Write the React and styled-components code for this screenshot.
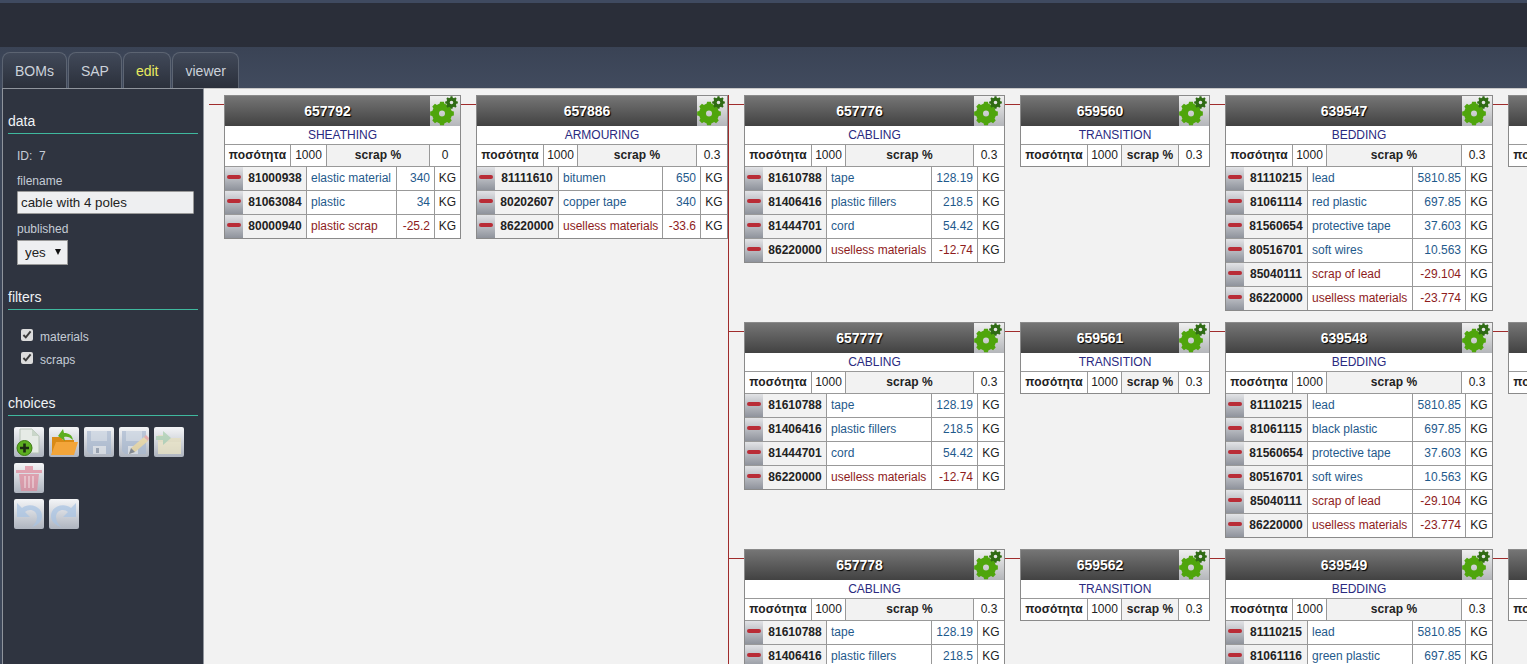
import React from 'react';
import styled, { createGlobalStyle } from 'styled-components';

const gearPath = (cx, cy, outer, inner, hole, teeth) => {
  let d = '';
  const step = (Math.PI * 2) / teeth;
  for (let i = 0; i < teeth; i++) {
    const a = i * step;
    const pts = [
      [inner, a - step * 0.5],
      [inner, a - step * 0.32],
      [outer, a - step * 0.2],
      [outer, a + step * 0.2],
      [inner, a + step * 0.32],
    ];
    pts.forEach(([r, t], j) => {
      const x = (cx + r * Math.cos(t)).toFixed(2);
      const y = (cy + r * Math.sin(t)).toFixed(2);
      d += `${i === 0 && j === 0 ? 'M' : 'L'}${x} ${y} `;
    });
  }
  d += 'Z ';
  d += `M${cx + hole} ${cy} A${hole} ${hole} 0 1 0 ${cx - hole} ${cy} A${hole} ${hole} 0 1 0 ${cx + hole} ${cy} Z`;
  return d;
};

const GearIcon = () => (
  <svg width="30" height="30" viewBox="0 0 30 30">
    <path d={gearPath(12, 17.5, 12, 10, 3, 8)} fill="#4fa50c" fillRule="evenodd" />
    <path d={gearPath(21.5, 6.5, 6.4, 5, 1.8, 8)} fill="#2f6b14" fillRule="evenodd" />
  </svg>
);

const PlusDocIcon = () => (
  <svg width="30" height="30" viewBox="0 0 30 30">
    <path d="M6 2h12l7 7v17H6z" fill="#e6ebe6" stroke="#b7c4b7" />
    <path d="M18 2v7h7z" fill="#c9d6c9" />
    <circle cx="10.5" cy="21" r="7.5" fill="#5cae20" stroke="#3d7a12" />
    <path d="M10.5 16.5v9M6 21h9" stroke="#1c2a12" strokeWidth="2.6" />
  </svg>
);

const OpenFolderIcon = () => (
  <svg width="30" height="30" viewBox="0 0 30 30">
    <path d="M3 28V10h9l2 3h11v3H8z" fill="#d98a16" />
    <path d="M7 15h22l-4 13H2z" fill="#f3a53a" />
    <path d="M9 9l5-7 1 4c5 0 8 2 9 7-3-3-6-4-9-3l1 4z" fill="#5cae20" />
  </svg>
);

const FloppyIcon = () => (
  <svg width="30" height="30" viewBox="0 0 30 30">
    <path d="M3 4h24v23H6l-3-3z" fill="#a9b9d0" />
    <path d="M7 4h16v10H7z" fill="#c9d3e0" />
    <path d="M9 19h13v8H9z" fill="#dfe4ea" />
    <path d="M12 21h3v5h-3z" fill="#8b97a8" />
  </svg>
);

const FloppyEditIcon = () => (
  <svg width="30" height="30" viewBox="0 0 30 30">
    <path d="M3 4h24v23H6l-3-3z" fill="#a9b9d0" />
    <path d="M7 4h16v10H7z" fill="#c9d3e0" />
    <path d="M9 19h10v8H9z" fill="#dfe4ea" />
    <path d="M10 27l2-6 13-11 4 4-13 11z" fill="#ecd79a" />
    <path d="M25 10l2-2 3 3-1 3z" fill="#e69a9a" />
    <path d="M10 27l2-6 4 4z" fill="#6d7480" />
  </svg>
);

const SendFolderIcon = () => (
  <svg width="30" height="30" viewBox="0 0 30 30">
    <path d="M4 27V8h9l2 3h12v16z" fill="#e6dfbd" />
    <path d="M4 15h23v12H4z" fill="#ede6c4" />
    <path d="M2 9h7V4l8 7-8 7v-5H2z" fill="#a9cfae" />
  </svg>
);

const TrashIcon = () => (
  <svg width="30" height="30" viewBox="0 0 30 30">
    <path d="M2 7h26v3H2z" fill="#e08a9c" />
    <path d="M11 3h8v4h-8z" fill="#e08a9c" />
    <path d="M5 11h20l-2 17H7z" fill="#e08a9c" />
    <path d="M10 13h2v12h-2zM14 13h2v12h-2zM18 13h2v12h-2z" fill="#f1bcc6" />
  </svg>
);

const undoArrow =
  'M3 4L3 18L16 18L11 13C15 9 23 11 23 18C23 22 21 25 18 28C24 26 28 22 28 17C28 7 15 3 8 9Z';

const UndoIcon = () => (
  <svg width="30" height="30" viewBox="0 0 30 30">
    <path d={undoArrow} fill="#a9c4e4" />
  </svg>
);

const RedoIcon = () => (
  <svg width="30" height="30" viewBox="0 0 30 30">
    <path d={undoArrow} fill="#a9c4e4" transform="matrix(-1 0 0 1 30 0)" />
  </svg>
);

const shapes = {
  sheathing: { width: 237, qty: '65px 37px 102px 1fr', item: '18px 63px 90px 38px 1fr' },
  armouring: { width: 252, qty: '66px 35px 118px 1fr', item: '18px 63px 104px 38px 1fr' },
  cabling: { width: 261, qty: '66px 35px 127px 1fr', item: '18px 63px 105px 46px 1fr' },
  transition: { width: 190, qty: '66px 35px 56px 1fr', item: '18px 63px 40px 40px 1fr' },
  bedding: { width: 268, qty: '66px 35px 134px 1fr', item: '18px 63px 105px 53px 1fr' },
};

const cabling = [
  ['81610788', 'tape', '128.19'],
  ['81406416', 'plastic fillers', '218.5'],
  ['81444701', 'cord', '54.42'],
  ['86220000', 'uselless materials', '-12.74', true],
];

const bedding = (plasticCode, plasticName) => [
  ['81110215', 'lead', '5810.85'],
  [plasticCode, plasticName, '697.85'],
  ['81560654', 'protective tape', '37.603'],
  ['80516701', 'soft wires', '10.563'],
  ['85040111', 'scrap of lead', '-29.104', true],
  ['86220000', 'uselless materials', '-23.774', true],
];

const branches = [
  [
    { id: '657776', title: 'CABLING', scrap: '0.3', shape: 'cabling', items: cabling },
    { id: '659560', title: 'TRANSITION', scrap: '0.3', shape: 'transition', items: [] },
    { id: '639547', title: 'BEDDING', scrap: '0.3', shape: 'bedding', items: bedding('81061114', 'red plastic') },
    { id: '639551', title: 'TRANSITION', scrap: '0.3', shape: 'transition', items: [] },
  ],
  [
    { id: '657777', title: 'CABLING', scrap: '0.3', shape: 'cabling', items: cabling },
    { id: '659561', title: 'TRANSITION', scrap: '0.3', shape: 'transition', items: [] },
    { id: '639548', title: 'BEDDING', scrap: '0.3', shape: 'bedding', items: bedding('81061115', 'black plastic') },
    { id: '639552', title: 'TRANSITION', scrap: '0.3', shape: 'transition', items: [] },
  ],
  [
    { id: '657778', title: 'CABLING', scrap: '0.3', shape: 'cabling', items: cabling },
    { id: '659562', title: 'TRANSITION', scrap: '0.3', shape: 'transition', items: [] },
    { id: '639549', title: 'BEDDING', scrap: '0.3', shape: 'bedding', items: bedding('81061116', 'green plastic') },
    { id: '639553', title: 'TRANSITION', scrap: '0.3', shape: 'transition', items: [] },
  ],
];

const BomCard = ({ id, title, scrap, shape, items }) => {
  const layout = shapes[shape];
  return (
    <Card $width={layout.width}>
      <CardHead>
        <CardId>{id}</CardId>
        <GearButton>
          <GearIcon />
        </GearButton>
      </CardHead>
      <CardTitle>{title}</CardTitle>
      <QtyRow $cols={layout.qty}>
        <QtyLabel>ποσότητα</QtyLabel>
        <QtyValue>1000</QtyValue>
        <QtyLabel $shaded>scrap %</QtyLabel>
        <QtyValue>{scrap}</QtyValue>
      </QtyRow>
      {items.map(([code, name, amount, isScrap]) => (
        <ItemRow key={code} $cols={layout.item}>
          <RemoveButton />
          <ItemCode>{code}</ItemCode>
          <ItemName $scrap={isScrap}>{name}</ItemName>
          <ItemAmount $scrap={isScrap}>{amount}</ItemAmount>
          <ItemUnit>KG</ItemUnit>
        </ItemRow>
      ))}
    </Card>
  );
};

const App = () => (
  <Page>
    <GlobalStyle />
    <TopBar />
    <TabBar>
      <Tab>BOMs</Tab>
      <Tab>SAP</Tab>
      <Tab $active>edit</Tab>
      <Tab>viewer</Tab>
    </TabBar>
    <Main>
      <Sidebar>
        <SectionTitle>data</SectionTitle>
        <IdLine>ID:&nbsp; 7</IdLine>
        <FieldLabel>filename</FieldLabel>
        <NameInput defaultValue="cable with 4 poles" />
        <FieldLabel>published</FieldLabel>
        <SelectBox>
          <PublishedSelect defaultValue="yes">
            <option value="yes">yes</option>
            <option value="no">no</option>
          </PublishedSelect>
        </SelectBox>
        <SectionTitle>filters</SectionTitle>
        <FilterList>
          <FilterRow>
            <input type="checkbox" defaultChecked />
            materials
          </FilterRow>
          <FilterRow>
            <input type="checkbox" defaultChecked />
            scraps
          </FilterRow>
        </FilterList>
        <SectionTitle>choices</SectionTitle>
        <ToolGroup>
          <ToolButton><PlusDocIcon /></ToolButton>
          <ToolButton><OpenFolderIcon /></ToolButton>
          <ToolButton $faded><FloppyIcon /></ToolButton>
          <ToolButton $faded><FloppyEditIcon /></ToolButton>
          <ToolButton $faded><SendFolderIcon /></ToolButton>
          <ToolButton $faded><TrashIcon /></ToolButton>
        </ToolGroup>
        <ToolGroup>
          <ToolButton $faded><UndoIcon /></ToolButton>
          <ToolButton $faded><RedoIcon /></ToolButton>
        </ToolGroup>
      </Sidebar>
      <Canvas>
        <TreeRow>
          <Link />
          <BomCard
            id="657792"
            title="SHEATHING"
            scrap="0"
            shape="sheathing"
            items={[
              ['81000938', 'elastic material', '340'],
              ['81063084', 'plastic', '34'],
              ['80000940', 'plastic scrap', '-25.2', true],
            ]}
          />
          <Link />
          <BomCard
            id="657886"
            title="ARMOURING"
            scrap="0.3"
            shape="armouring"
            items={[
              ['81111610', 'bitumen', '650'],
              ['80202607', 'copper tape', '340'],
              ['86220000', 'uselless materials', '-33.6', true],
            ]}
          />
          <BranchList>
            {branches.map((cards) => (
              <TreeRow key={cards[0].id}>
                {cards.map((card) => (
                  <React.Fragment key={card.id}>
                    <Link />
                    <BomCard {...card} />
                  </React.Fragment>
                ))}
              </TreeRow>
            ))}
          </BranchList>
        </TreeRow>
      </Canvas>
    </Main>
  </Page>
);

const GlobalStyle = createGlobalStyle`
  html, body {
    margin: 0;
    height: 100%;
    overflow: hidden;
  }
  * {
    box-sizing: border-box;
  }
  body {
    font-family: "Liberation Sans", Arial, sans-serif;
    font-size: 12px;
  }
`;

const Page = styled.div`
  height: 100vh;
  display: flex;
  flex-direction: column;
  overflow: hidden;
  background: #3d4759;
`;

const TopBar = styled.div`
  flex: none;
  height: 47px;
  background: #2a2e39;
  border-top: 3px solid #3f4a60;
`;

const TabBar = styled.div`
  flex: none;
  height: 41px;
  padding: 5px 0 0 2px;
  display: flex;
  gap: 1px;
  background: linear-gradient(#3a4355, #414b5e);
`;

const Tab = styled.div`
  height: 36px;
  padding: 0 12px;
  display: flex;
  align-items: center;
  font-size: 14px;
  color: ${(p) => (p.$active ? '#eaea5e' : '#ccd2da')};
  background: linear-gradient(#414959, #2b303b);
  border: 1px solid #5c6472;
  border-bottom: 0;
  border-radius: 8px 8px 0 0;
`;

const Main = styled.div`
  flex: 1;
  min-height: 0;
  display: flex;
  padding-left: 2px;
`;

const Sidebar = styled.div`
  flex: none;
  width: 202px;
  padding: 25px 5px 0 5px;
  display: flex;
  flex-direction: column;
  align-items: flex-start;
  background: #2f3440;
  border: 1px solid #8f949c;
  border-bottom: 0;
`;

const SectionTitle = styled.h3`
  width: 100%;
  flex: none;
  height: 20px;
  margin: 0;
  line-height: 14px;
  font-size: 14px;
  font-weight: normal;
  color: #f0f2f5;
  border-bottom: 1px solid #3fb89e;
`;

const IdLine = styled.div`
  margin: 15px 0 3px 9px;
  line-height: 14px;
  color: #c5ccd6;
`;

const FieldLabel = styled.div`
  margin: 8px 0 3px 9px;
  line-height: 14px;
  color: #c5ccd6;
`;

const NameInput = styled.input`
  width: 177px;
  height: 23px;
  margin-left: 9px;
  padding: 0 3px;
  font: 13.33px "Liberation Sans", Arial, sans-serif;
  color: #222;
  background: #eeeff1;
  border: 1px solid #999;
  border-radius: 1px;
  outline: 0;
`;

const SelectBox = styled.div`
  position: relative;
  width: 51px;
  height: 25px;
  margin: 1px 0 25px 9px;
  &::after {
    content: '';
    position: absolute;
    left: 38px;
    top: 9px;
    border-style: solid;
    border-width: 6px 3.5px 0;
    border-color: #111 transparent transparent;
    pointer-events: none;
  }
`;

const PublishedSelect = styled.select`
  width: 100%;
  height: 100%;
  padding: 0 0 0 7px;
  appearance: none;
  font: 13.33px "Liberation Sans", Arial, sans-serif;
  color: #222;
  background: #eeeff1;
  border: 1px solid #999;
  border-radius: 0;
  outline: 0;
`;

const FilterList = styled.div`
  margin: 20px 0 29px 13px;
  display: flex;
  flex-direction: column;
  gap: 9px;
`;

const FilterRow = styled.label`
  height: 14px;
  display: flex;
  align-items: center;
  gap: 7px;
  color: #c5ccd6;
  input {
    width: 12px;
    height: 12px;
    margin: -4px 0 0;
    accent-color: #dcdcdc;
  }
`;

const ToolGroup = styled.div`
  margin: 11px 0 -5px 6px;
  display: flex;
  flex-wrap: wrap;
  gap: 6px 5px;
  width: 176px;
`;

const ToolButton = styled.div`
  width: 30px;
  height: 30px;
  display: flex;
  background: linear-gradient(#f4f5f7, #aeb4bf);
  border-radius: 2px;
  svg {
    opacity: ${(p) => (p.$faded ? 0.72 : 1)};
  }
`;

const Canvas = styled.div`
  flex: 1;
  min-width: 0;
  padding: 6px 0 0 5px;
  overflow: hidden;
  background: #f2f2f2;
  border-top: 1px solid #c8c8c8;
`;

const TreeRow = styled.div`
  display: flex;
  align-items: flex-start;
  flex-wrap: nowrap;
`;

const Link = styled.div`
  flex: none;
  width: 15px;
  height: 1px;
  margin-top: 9px;
  background: #a02c2c;
`;

const BranchList = styled.div`
  flex: none;
  display: flex;
  flex-direction: column;
  gap: 11px;
  border-left: 1px solid #a02c2c;
`;

const Card = styled.div`
  flex: none;
  width: ${(p) => p.$width}px;
  background: #fff;
  border: 1px solid #8a8a8a;
`;

const CardHead = styled.div`
  height: 30px;
  display: flex;
  background: linear-gradient(#757575, #424242);
`;

const CardId = styled.div`
  flex: 1;
  text-align: center;
  line-height: 30px;
  font-size: 14px;
  font-weight: bold;
  color: #fff;
  text-shadow: 1px 1px 1px #000;
`;

const GearButton = styled.div`
  flex: none;
  width: 30px;
  height: 30px;
  background: linear-gradient(#f0f0f0, #b4b6ba);
`;

const CardTitle = styled.div`
  height: 19px;
  line-height: 19px;
  text-align: center;
  color: #2a2a80;
  border-bottom: 1px solid #999;
`;

const QtyRow = styled.div`
  height: 21px;
  display: grid;
  grid-template-columns: ${(p) => p.$cols};
`;

const QtyLabel = styled.div`
  line-height: 20px;
  text-align: center;
  font-weight: bold;
  color: #222;
  background: ${(p) => (p.$shaded ? '#f2f2f2' : '#fff')};
  letter-spacing: 0.1px;
`;

const QtyValue = styled.div`
  line-height: 20px;
  text-align: center;
  color: #222;
  border-left: 1px solid #999;
  border-right: 1px solid #999;
  &:last-child {
    border-right: 0;
  }
`;

const ItemRow = styled.div`
  height: 24px;
  display: grid;
  grid-template-columns: ${(p) => p.$cols};
  border-top: 1px solid #999;
  &:first-of-type {
    border-top-width: 2px;
  }
`;

const RemoveButton = styled.div`
  position: relative;
  background: linear-gradient(#e2e3e6, #8f939c);
  &::after {
    content: '';
    position: absolute;
    left: 2px;
    right: 2px;
    top: 8px;
    height: 4px;
    border-radius: 2px;
    background: #b92c36;
  }
`;

const ItemCode = styled.div`
  padding-left: 1px;
  line-height: 23px;
  text-align: center;
  font-weight: bold;
  color: #222;
  background: #f2f2f2;
`;

const ItemName = styled.div`
  padding-left: 4px;
  line-height: 23px;
  white-space: nowrap;
  color: ${(p) => (p.$scrap ? '#8e1c1c' : '#1f5a8c')};
  border-left: 1px solid #999;
`;

const ItemAmount = styled.div`
  padding-right: 4px;
  line-height: 23px;
  text-align: right;
  color: ${(p) => (p.$scrap ? '#8e1c1c' : '#1f5a8c')};
  border-left: 1px solid #999;
`;

const ItemUnit = styled.div`
  line-height: 23px;
  text-align: center;
  color: #222;
  border-left: 1px solid #999;
`;

export default App;
